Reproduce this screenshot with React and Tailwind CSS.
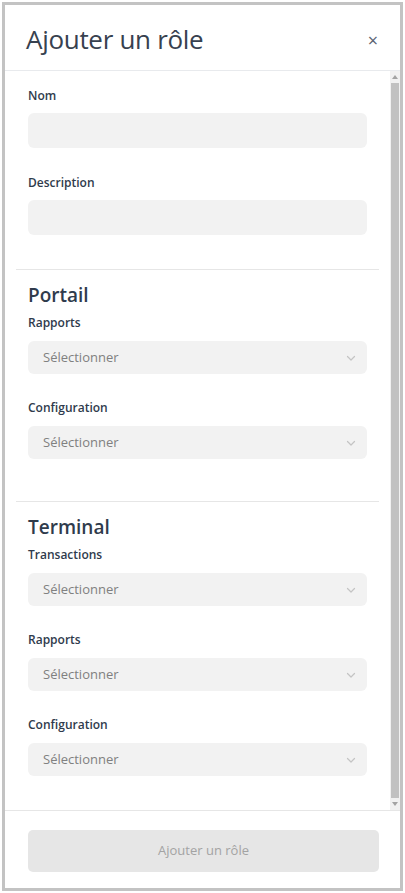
import React from "react";

function Chevron() {
  return (
    <svg width="12" height="12" viewBox="0 0 12 12" fill="none" className="text-[#c4c4c4]">
      <path d="M2.5 4.5L6 8l3.5-3.5" stroke="currentColor" strokeWidth="1.2" strokeLinecap="round" strokeLinejoin="round" />
    </svg>
  );
}

function Field({ label, children, last, gap = "mb-[9px]", space = "mb-[27px]" }) {
  return (
    <div className={last ? "" : space}>
      <label className={`block text-[12px] font-semibold text-[#2f3b4c] leading-[16px] ${gap}`}>{label}</label>
      {children}
    </div>
  );
}

function TextInput() {
  return <div className="h-[35px] rounded-[6px] bg-[#f2f2f2]" />;
}

function Select() {
  return (
    <div className="h-[33px] rounded-[6px] bg-[#f2f2f2] flex items-center justify-between pl-[15px] pr-[10px]">
      <span className="text-[13px] text-[#808080]">Sélectionner</span>
      <Chevron />
    </div>
  );
}

function Section({ title, fields }) {
  return (
    <div className="border-t border-[#e6e6e6] px-[12px] pt-[12px] pb-[42px]">
      <h3 className="text-[19px] font-semibold text-[#2f3b4c] leading-[26px] mb-[7px]">{title}</h3>
      {fields.map((f, i) => (
        <Field key={f} label={f} gap="mb-[10px]" space="mb-[26px]" last={i === fields.length - 1}>
          <Select />
        </Field>
      ))}
    </div>
  );
}

export default function App() {
  return (
    <div className="w-[405px] h-[893px] bg-white p-[2px]" style={{ fontFamily: '"Open Sans", sans-serif' }}>
      <div className="h-full border-[3px] border-[#c3c3c3] flex flex-col bg-white">
        {/* header */}
        <div className="h-[66px] flex items-center justify-between pl-[21px] pr-[22px] pt-[4px] border-b border-[#e8eaed]">
          <h2 className="text-[26px] text-[#37414f] tracking-[-0.3px]">Ajouter un rôle</h2>
          <span className="text-[18px] text-[#5a6270] leading-none">×</span>
        </div>

        {/* body */}
        <div className="flex-1 flex min-h-0">
          <div className="flex-1 px-[11px]">
            <div className="px-[12px] pt-[17px] pb-[34px]">
              <Field label="Nom">
                <TextInput />
              </Field>
              <Field label="Description" last>
                <TextInput />
              </Field>
            </div>
            <Section title="Portail" fields={["Rapports", "Configuration"]} />
            <Section title="Terminal" fields={["Transactions", "Rapports", "Configuration"]} />
          </div>
          {/* scrollbar */}
          <div className="w-[10px] flex flex-col bg-[#f1f1f1]">
            <div className="h-[12px] flex items-center justify-center">
              <svg width="6" height="4" viewBox="0 0 6 4"><path d="M0 4L3 0l3 4z" fill="#a3a3a3" /></svg>
            </div>
            <div className="flex-1 bg-[#c1c1c1] mx-[1px]" />
            <div className="h-[12px] flex items-center justify-center">
              <svg width="6" height="4" viewBox="0 0 6 4"><path d="M0 0l3 4 3-4z" fill="#a3a3a3" /></svg>
            </div>
          </div>
        </div>

        {/* footer */}
        <div className="border-t border-[#e6e6e6] pl-[23px] pr-[21px] pt-[19px] pb-[16px]">
          <button className="w-full h-[42px] rounded-[5px] bg-[#e6e6e6] text-[13px] text-[#a3a3a3]">Ajouter un rôle</button>
        </div>
      </div>
    </div>
  );
}
